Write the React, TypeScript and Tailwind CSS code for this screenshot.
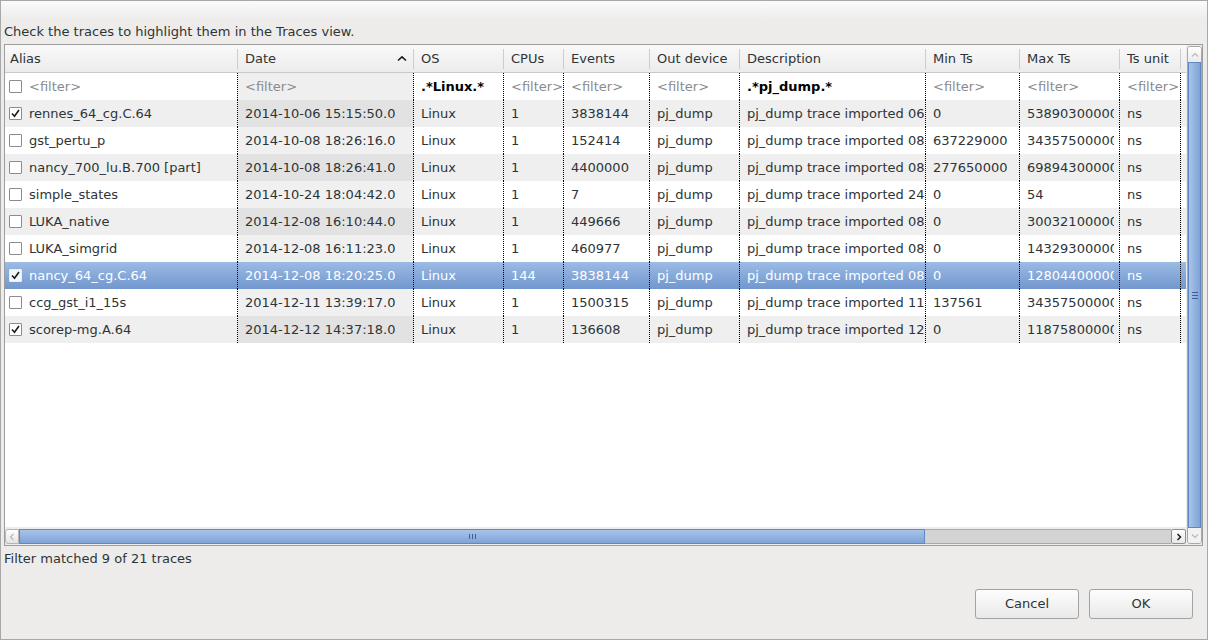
import React from "react";

type Row = {
  checked: boolean;
  selected?: boolean;
  alias: string;
  date: string;
  cpus: string;
  events: string;
  desc: string;
  min: string;
  max: string;
};

const rows: Row[] = [
  { checked: true, alias: "rennes_64_cg.C.64", date: "2014-10-06 15:15:50.0", cpus: "1", events: "3838144", desc: "pj_dump trace imported 06 Oct 2014", min: "0", max: "53890300000" },
  { checked: false, alias: "gst_pertu_p", date: "2014-10-08 18:26:16.0", cpus: "1", events: "152414", desc: "pj_dump trace imported 08 Oct 2014", min: "637229000", max: "34357500000" },
  { checked: false, alias: "nancy_700_lu.B.700 [part]", date: "2014-10-08 18:26:41.0", cpus: "1", events: "4400000", desc: "pj_dump trace imported 08 Oct 2014", min: "277650000", max: "69894300000" },
  { checked: false, alias: "simple_states", date: "2014-10-24 18:04:42.0", cpus: "1", events: "7", desc: "pj_dump trace imported 24 Oct 2014", min: "0", max: "54" },
  { checked: false, alias: "LUKA_native", date: "2014-12-08 16:10:44.0", cpus: "1", events: "449666", desc: "pj_dump trace imported 08 Dec 2014", min: "0", max: "30032100000" },
  { checked: false, alias: "LUKA_simgrid", date: "2014-12-08 16:11:23.0", cpus: "1", events: "460977", desc: "pj_dump trace imported 08 Dec 2014", min: "0", max: "14329300000" },
  { checked: true, selected: true, alias: "nancy_64_cg.C.64", date: "2014-12-08 18:20:25.0", cpus: "144", events: "3838144", desc: "pj_dump trace imported 08 Dec 2014", min: "0", max: "12804400000" },
  { checked: false, alias: "ccg_gst_i1_15s", date: "2014-12-11 13:39:17.0", cpus: "1", events: "1500315", desc: "pj_dump trace imported 11 Dec 2014", min: "137561", max: "34357500000" },
  { checked: true, alias: "scorep-mg.A.64", date: "2014-12-12 14:37:18.0", cpus: "1", events: "136608", desc: "pj_dump trace imported 12 Dec 2014", min: "0", max: "11875800000" },
];

const cols = [
  { label: "Alias", w: "w-[233px]" },
  { label: "Date", w: "w-[176px]" },
  { label: "OS", w: "w-[90px]" },
  { label: "CPUs", w: "w-[60px]" },
  { label: "Events", w: "w-[86px]" },
  { label: "Out device", w: "w-[90px]" },
  { label: "Description", w: "w-[186px]" },
  { label: "Min Ts", w: "w-[94px]" },
  { label: "Max Ts", w: "w-[100px]" },
  { label: "Ts unit", w: "w-[61px]" },
];

function Checkbox({ checked, selected }: { checked: boolean; selected?: boolean }) {
  return (
    <div
      className={
        "w-[13px] h-[13px] shrink-0 border rounded-[1px] flex items-center justify-center " +
        (selected ? "border-[#e8eef8] bg-[#f4f7fc]" : "border-[#8c8c8c] bg-white")
      }
    >
      {checked && (
        <svg width="11" height="11" viewBox="0 0 11 11">
          <path d="M2 5.5 L4.5 8.2 L9 2" fill="none" stroke="#1a1a1a" strokeWidth="1.6" />
        </svg>
      )}
    </div>
  );
}

function Cell({
  w,
  children,
  first,
  className = "",
}: {
  w: string;
  children: React.ReactNode;
  first?: boolean;
  className?: string;
}) {
  return (
    <div
      className={
        w +
        " shrink-0 h-full border-r border-dotted border-black flex items-center " +
        (first ? "pl-[4px] gap-[7px] " : "pl-[7px] ") +
        className
      }
    >
      {children}
    </div>
  );
}

function Clip({ children }: { children: React.ReactNode }) {
  return <div className="overflow-hidden whitespace-nowrap">{children}</div>;
}

export default function App() {
  return (
    <div className="w-[1208px] h-[640px] bg-[#edeceb] border border-[#a8a8a8] flex flex-col font-['DejaVu_Sans',sans-serif] text-[13px] text-[#2e3436] overflow-hidden">
      <div className="h-[19px] shrink-0 bg-linear-to-b from-[#fbfbfb] to-[#edeceb]" />
      <div className="h-[24px] shrink-0 leading-[24px] pl-[3px]">Check the traces to highlight them in the Traces view.</div>

      {/* table */}
      <div className="h-[502px] shrink-0 ml-[3px] mr-[4px] border border-[#9d9d9d] flex">
        <div className="w-[1181px] shrink-0 flex flex-col">
          {/* header */}
          <div className="h-[28px] shrink-0 flex bg-linear-to-b from-[#f9f9f9] to-[#ececec] border-b border-[#c9c9c9]">
            {cols.map((c, i) => (
              <div key={c.label} className={c.w + " shrink-0 h-full flex items-center justify-between"}>
                <span className={i === 0 ? "pl-[5px]" : "pl-[7px]"}>{c.label}</span>
                <div className="flex items-center h-full">
                  {i === 1 && (
                    <svg width="10" height="7" viewBox="0 0 10 7" className="mr-[6px]">
                      <path d="M1 5.5 L5 1.8 L9 5.5" fill="none" stroke="#1c1c1c" strokeWidth="1.6" />
                    </svg>
                  )}
                  <div className="w-px h-[20px] bg-[#cdcdcd]" />
                </div>
              </div>
            ))}
          </div>

          {/* body */}
          <div className="h-[454px] shrink-0 bg-white flex flex-col">
            {/* filter row */}
            <div className="h-[27px] shrink-0 flex bg-white">
              <Cell w={cols[0].w} first>
                <Checkbox checked={false} />
                <span className="text-[#8b8b8b]">&lt;filter&gt;</span>
              </Cell>
              <Cell w={cols[1].w} className="bg-[#efefef] text-[#8b8b8b]">&lt;filter&gt;</Cell>
              <Cell w={cols[2].w} className="font-bold text-black">.*Linux.*</Cell>
              <Cell w={cols[3].w} className="text-[#8b8b8b] pr-0"><Clip>&lt;filter&gt;</Clip></Cell>
              <Cell w={cols[4].w} className="text-[#8b8b8b]">&lt;filter&gt;</Cell>
              <Cell w={cols[5].w} className="text-[#8b8b8b]">&lt;filter&gt;</Cell>
              <Cell w={cols[6].w} className="font-bold text-black">.*pj_dump.*</Cell>
              <Cell w={cols[7].w} className="text-[#8b8b8b]">&lt;filter&gt;</Cell>
              <Cell w={cols[8].w} className="text-[#8b8b8b]">&lt;filter&gt;</Cell>
              <Cell w={cols[9].w} className="text-[#8b8b8b] pr-[1px]"><Clip>&lt;filter&gt;</Clip></Cell>
            </div>
            {rows.map((r, idx) => {
              const gray = idx % 2 === 0;
              const rowBg = r.selected
                ? "bg-linear-to-b from-[#9cbbe5] to-[#7197ce] text-white"
                : gray
                ? "bg-[#efefef]"
                : "bg-white";
              const dateBg = r.selected ? "" : gray ? "bg-[#e2e2e2]" : "bg-[#f0f0f0]";
              return (
                <div key={r.alias} className={"h-[27px] shrink-0 flex " + rowBg}>
                  <Cell w={cols[0].w} first>
                    <Checkbox checked={r.checked} selected={r.selected} />
                    <Clip>{r.alias}</Clip>
                  </Cell>
                  <Cell w={cols[1].w} className={dateBg}><Clip>{r.date}</Clip></Cell>
                  <Cell w={cols[2].w}>Linux</Cell>
                  <Cell w={cols[3].w}>{r.cpus}</Cell>
                  <Cell w={cols[4].w}>{r.events}</Cell>
                  <Cell w={cols[5].w}>pj_dump</Cell>
                  <Cell w={cols[6].w} className="pr-0"><Clip>{r.desc}</Clip></Cell>
                  <Cell w={cols[7].w} className="pr-[2px]"><Clip>{r.min}</Clip></Cell>
                  <Cell w={cols[8].w} className="pr-[5px]"><Clip>{r.max}</Clip></Cell>
                  <Cell w={cols[9].w}>ns</Cell>
                </div>
              );
            })}
          </div>

          {/* horizontal scrollbar */}
          <div className="h-[15px] shrink-0 mt-[2px] flex">
            <div className="w-[14px] h-full shrink-0 bg-linear-to-b from-white to-[#e4e4e4] border border-[#b5b5b5] rounded-l-[3px] flex items-center justify-center">
              <svg width="6" height="8" viewBox="0 0 6 8">
                <path d="M4.5 1 L1.5 4 L4.5 7" fill="none" stroke="#b8b8b8" strokeWidth="1.2" />
              </svg>
            </div>
            <div className="w-[906px] h-full shrink-0 bg-linear-to-b from-[#a8c4eb] to-[#7fa3d7] border border-[#6088c0] flex items-center justify-center">
              <div className="flex gap-[2px]">
                <div className="w-px h-[5px] bg-[#3e5f8f]" />
                <div className="w-px h-[5px] bg-[#3e5f8f]" />
                <div className="w-px h-[5px] bg-[#3e5f8f]" />
              </div>
            </div>
            <div className="flex-1 h-full bg-[#d3d3d3] border-y border-[#a9a9a9]" />
            <div className="w-[15px] h-full shrink-0 bg-linear-to-b from-white to-[#e8e8e8] border border-[#8f8f8f] rounded-[2px] flex items-center justify-center">
              <svg width="6" height="8" viewBox="0 0 6 8">
                <path d="M1.5 1 L4.5 4 L1.5 7" fill="none" stroke="#1f1f1f" strokeWidth="1.5" />
              </svg>
            </div>
          </div>
        </div>

        {/* vertical scrollbar */}
        <div className="flex-1 flex justify-end py-[1px]">
          <div className="w-[15px] h-full flex flex-col border border-[#a8a8a8] rounded-[3px] overflow-hidden">
            <div className="h-[15px] shrink-0 bg-linear-to-b from-white to-[#ebebeb] flex items-center justify-center">
              <svg width="8" height="6" viewBox="0 0 8 6">
                <path d="M1 4.5 L4 1.5 L7 4.5" fill="none" stroke="#b8b8b8" strokeWidth="1.2" />
              </svg>
            </div>
            <div className="flex-1 bg-linear-to-r from-[#a8c4eb] to-[#7fa3d7] border border-[#6088c0] flex items-center justify-center">
              <div className="flex flex-col gap-[2px]">
                <div className="w-[6px] h-px bg-[#3e5f8f]" />
                <div className="w-[6px] h-px bg-[#3e5f8f]" />
                <div className="w-[6px] h-px bg-[#3e5f8f]" />
              </div>
            </div>
            <div className="h-[15px] shrink-0 bg-[#f2f2f2] flex items-center justify-center">
              <svg width="8" height="6" viewBox="0 0 8 6">
                <path d="M1 1.5 L4 4.5 L7 1.5" fill="none" stroke="#b8b8b8" strokeWidth="1.2" />
              </svg>
            </div>
          </div>
        </div>
      </div>

      <div className="h-[25px] shrink-0 leading-[25px] pl-[3px]">Filter matched 9 of 21 traces</div>
      <div className="flex-1" />
      <div className="h-[30px] shrink-0 flex justify-end gap-[10px] pr-[14px] mb-[20px]">
        <button className="w-[104px] h-full rounded-[3px] border border-[#a2a2a2] bg-linear-to-b from-[#fdfdfd] to-[#e9e9e9] text-[#2e3436]">Cancel</button>
        <button className="w-[104px] h-full rounded-[3px] border border-[#a2a2a2] bg-linear-to-b from-[#fdfdfd] to-[#e9e9e9] text-[#2e3436]">OK</button>
      </div>
    </div>
  );
}
